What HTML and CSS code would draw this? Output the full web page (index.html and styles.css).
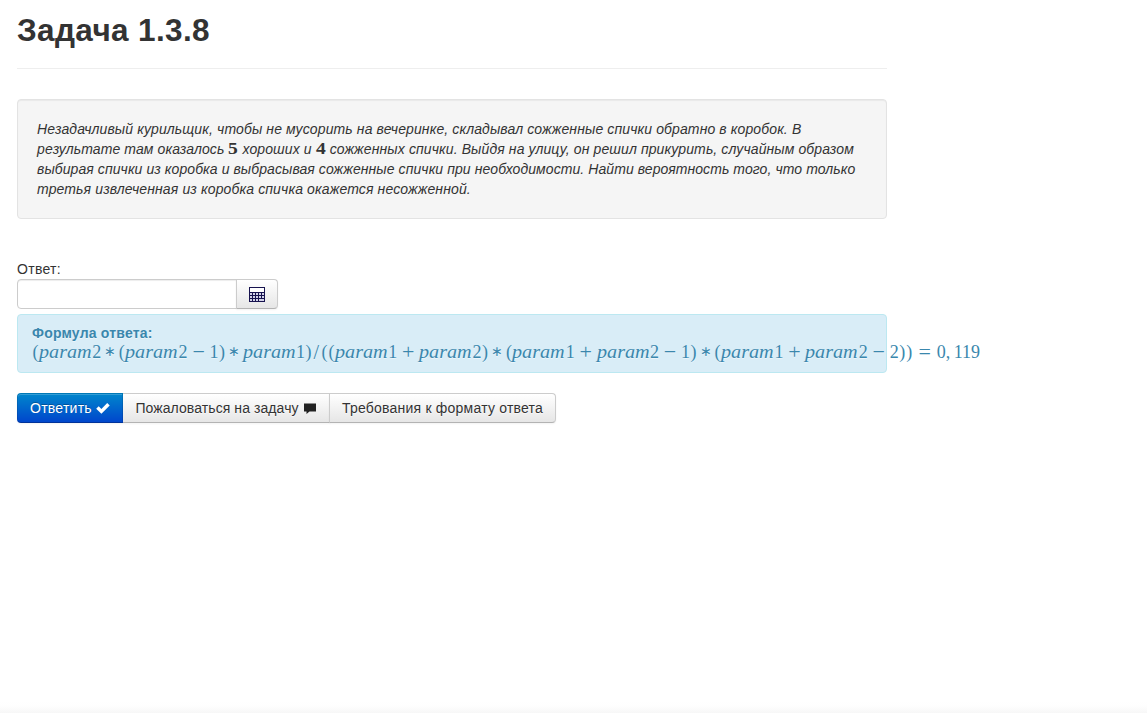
FILE: index.html
```html
<!DOCTYPE html>
<html lang="ru">
<head>
<meta charset="utf-8">
<title>Задача 1.3.8</title>
<link rel="stylesheet" href="styles.css">
</head>
<body>
<main class="page">
  <header class="page-header"><h1>Задача 1.3.8</h1></header>
  <section class="well"><span class="l1">Незадачливый курильщик, чтобы не мусорить на вечеринке, складывал сожженные спички обратно в коробок. В</span><br><span class="l2">результате там оказалось <b class="num">5</b> хороших и <b class="num">4</b> сожженных спички. Выйдя на улицу, он решил прикурить, случайным образом</span><br><span class="l3">выбирая спички из коробка и выбрасывая сожженные спички при необходимости. Найти вероятность того, что только</span><br><span class="l4">третья извлеченная из коробка спичка окажется несожженной.</span></section>
  <form class="answer">
    <label for="answer">Ответ:</label>
    <div class="input-append">
      <input id="answer" type="text">
      <button type="button" class="btn calc" aria-label="Калькулятор">
        <svg width="16" height="15" viewBox="0 0 16 15" shape-rendering="crispEdges">
          <path fill="#17134f" d="M0 0h16v15H0z"/>
          <path fill="#fff" d="M1 1h14v4H1z"/>
          <path fill="#d4d4ea" d="M1 6h2v2H1zM4 6h2v2H4zM7 6h2v2H7zM10 6h2v2h-2zM13 6h2v2h-2zM1 9h2v2H1zM4 9h2v2H4zM7 9h2v2H7zM10 9h2v2h-2zM13 9h2v2h-2zM1 12h2v2H1zM4 12h2v2H4zM7 12h2v2H7zM10 12h5v2h-5z"/>
        </svg>
      </button>
    </div>
    <div class="alert">
      <strong>Формула ответа:</strong>
      <div class="formula"><span class="par">(</span><i>param</i><span>2</span><span class="op ast">∗</span><span class="par">(</span><i>param</i><span>2</span><span class="op">−</span><span>1</span><span class="par">)</span><span class="op ast">∗</span><i>param</i><span>1</span><span class="par">)</span><span class="slash">/</span><span class="par">(</span><span class="par">(</span><i>param</i><span>1</span><span class="op">+</span><i>param</i><span>2</span><span class="par">)</span><span class="op ast">∗</span><span class="par">(</span><i>param</i><span>1</span><span class="op">+</span><i>param</i><span>2</span><span class="op">−</span><span>1</span><span class="par">)</span><span class="op ast">∗</span><span class="par">(</span><i>param</i><span>1</span><span class="op">+</span><i>param</i><span>2</span><span class="op">−</span><span>2</span><span class="par">)</span><span class="par">)</span><span class="op eq">=</span><span>0</span><span class="comma">,</span><span>119</span></div>
    </div>
    <div class="btn-group">
      <button type="button" class="btn primary">Ответить <svg class="ico" width="14" height="14" viewBox="0 0 14 14"><path fill="#fff" d="M.2 7.700 2.700 5.200l2.700 2.700L11.200 2 13.700 4.500 5.400 12.800z"/></svg></button>
      <button type="button" class="btn report">Пожаловаться на задачу <svg class="ico" width="14" height="14" viewBox="0 0 14 14"><path fill="#222" d="M1 2.500h12v8H6.500L3.500 13v-2.500H1z"/></svg></button>
      <button type="button" class="btn rules">Требования к формату ответа</button>
    </div>
  </form>
</main>
</body>
</html>
```
FILE: styles.css
```css
* { box-sizing: border-box; }
body {
  margin: 0;
  min-height: 713px;
  font: 14px/20px "Liberation Sans", Arial, sans-serif;
  color: #333;
  background: linear-gradient(to top, #f7f7f7, #fefefe 7px, #fff 12px);
}
.page { width: 870px; margin-left: 17px; padding-top: 10px; }
.page-header { height: 59px; margin-bottom: 30px; border-bottom: 1px solid #eee; }
h1 { margin: 0; font-size: 31.5px; line-height: 40px; letter-spacing: .36px; }
.well {
  height: 120px;
  padding: 19px;
  font-style: italic;
  white-space: nowrap;
  background: #f5f5f5;
  border: 1px solid #e3e3e3;
  border-radius: 4px;
  box-shadow: inset 0 1px 1px rgba(0,0,0,.05);
}
.l1 { letter-spacing: .117px; }
.l2 { letter-spacing: .107px; }
.l3 { letter-spacing: .08px; }
.l4 { letter-spacing: .13px; }
.num {
  display: inline-block;
  width: 10px;
  font: bold 17px/18px "Liberation Serif", serif;
  letter-spacing: 0;
  text-align: center;
  transform: scaleX(1.15);
}
.answer { margin: 40px 0 0; }
label { display: block; letter-spacing: .3px; }
.input-append { display: flex; height: 30px; }
input {
  width: 220px;
  height: 30px;
  border: 1px solid #ccc;
  border-radius: 4px 0 0 4px;
  background: #fff;
  box-shadow: inset 0 1px 1px rgba(0,0,0,.075);
}
.btn {
  height: 30px;
  margin: 0 0 0 -1px;
  padding: 0 12px;
  font: inherit;
  color: #333;
  text-shadow: 0 1px 1px rgba(255,255,255,.75);
  white-space: nowrap;
  border: 1px solid #ccc;
  border-bottom-color: #b3b3b3;
  background: linear-gradient(#fff, #e6e6e6);
  box-shadow: inset 0 1px 0 rgba(255,255,255,.2), 0 1px 2px rgba(0,0,0,.05);
}
.calc { width: 42px; border-radius: 0 4px 4px 0; }
.calc svg { display: block; }
.alert {
  height: 59px;
  margin: 5px 0 20px;
  padding: 8px 14px;
  color: #3a87ad;
  text-shadow: 0 1px 0 rgba(255,255,255,.5);
  white-space: nowrap;
  background: #d9edf7;
  border: 1px solid #bce8f1;
  border-radius: 4px;
}
.alert strong { display: block; letter-spacing: .2px; }
.formula { display: flex; margin-top: -1px; font: 18px/20px "Liberation Serif", serif; }
.formula > * { flex: none; }
.formula i { width: 53.3px; transform: scaleX(1.12); transform-origin: 0 0; }
.par { width: 7px; text-align: center; }
.op { width: 22px; text-align: center; font-size: 22px; }
.ast { width: 17px; font-size: 14px; }
.eq { width: 24px; }
.slash { width: 9px; text-align: center; font-size: 20px; }
.comma { width: 8px; }
.btn-group { display: flex; }
.btn-group .btn { padding: 0; }
.btn-group .primary {
  width: 106px;
  margin-left: 0;
  letter-spacing: .25px;
  border-radius: 4px 0 0 4px;
  color: #fff;
  text-shadow: 0 -1px 0 rgba(0,0,0,.25);
  border-color: rgba(0,0,0,.1) rgba(0,0,0,.1) rgba(0,0,0,.25);
  background: linear-gradient(#08c, #04c);
  background-origin: border-box;
}
.btn-group .report { width: 207px; margin-left: 0; border-left-width: 0; letter-spacing: .08px; }
.btn-group .rules { width: 227px; border-radius: 0 4px 4px 0; letter-spacing: .22px; }
.ico { vertical-align: -2px; }
```
